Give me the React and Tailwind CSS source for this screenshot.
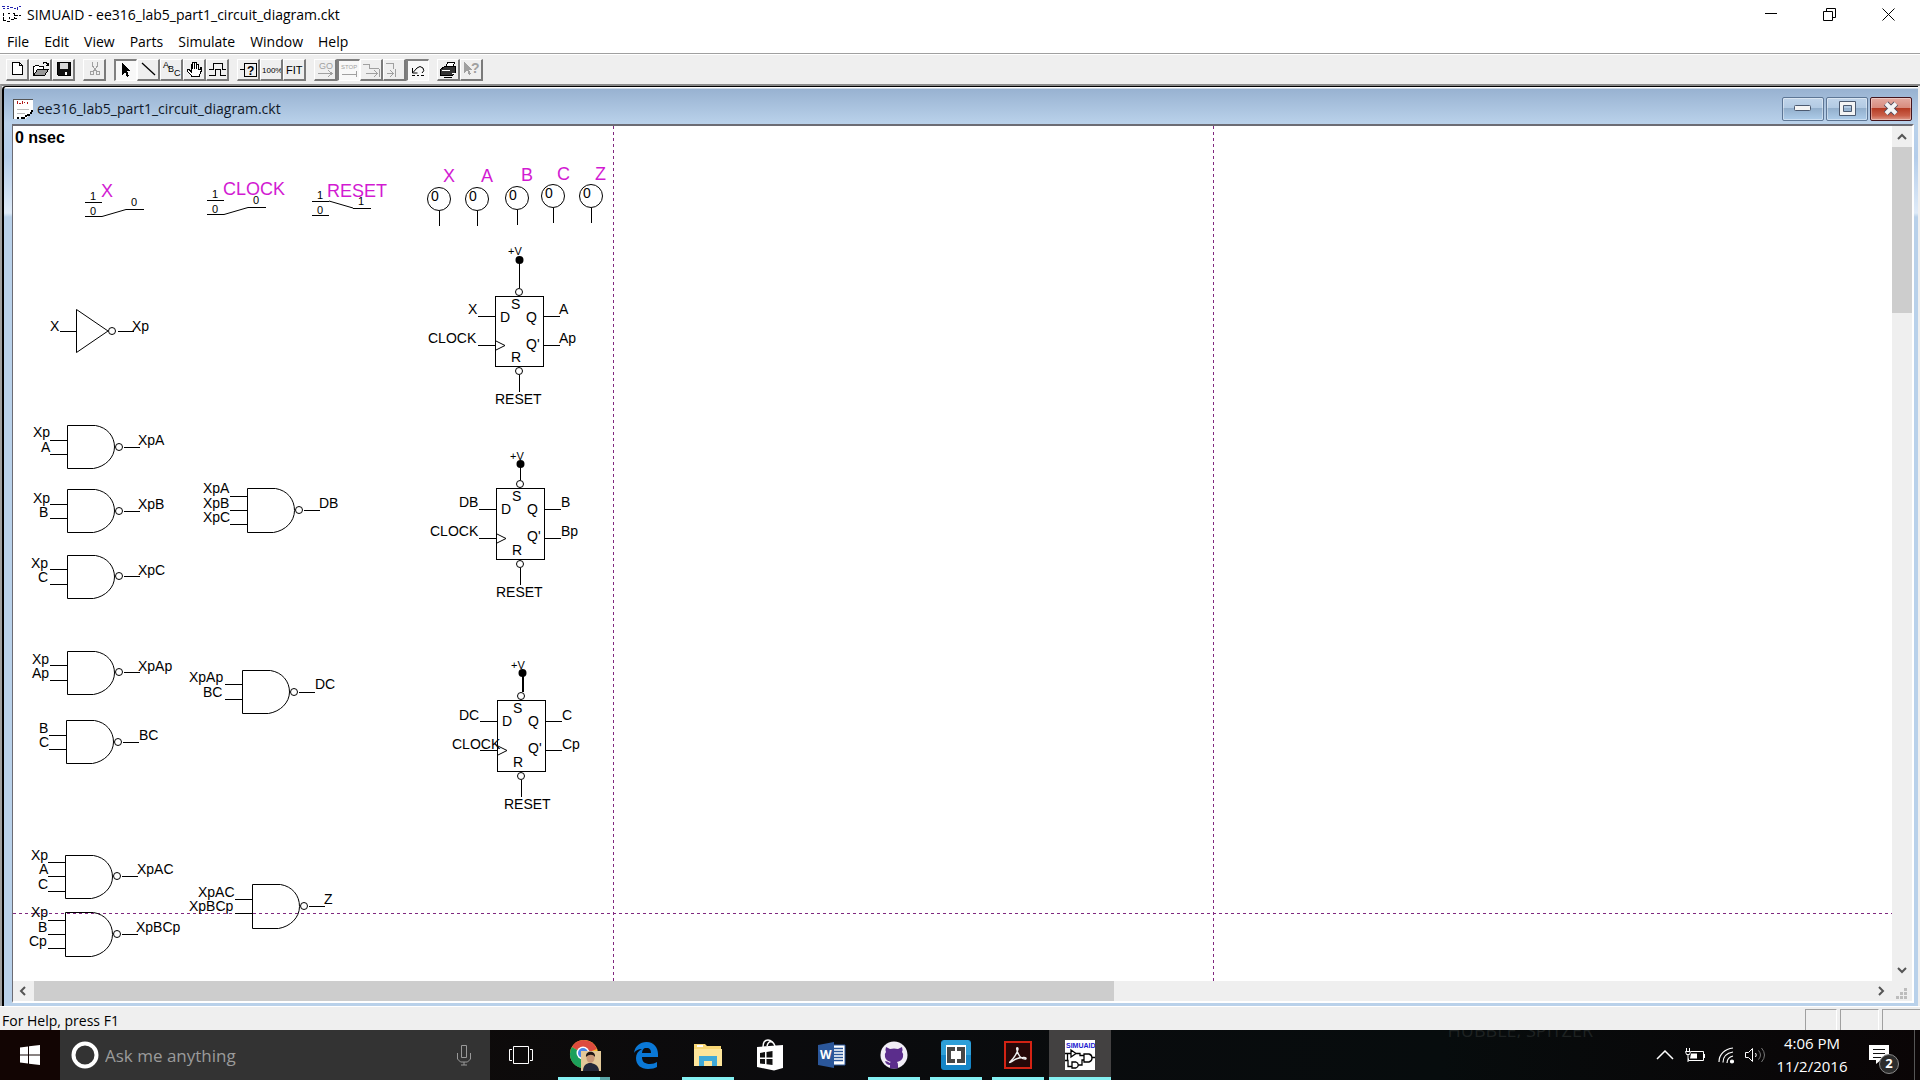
import React from "react";

/* ---------- circuit diagram ---------- */

function Label({ x, y, size = 14, fill = "#000", bold, children }) {
  return (
    <text x={x} y={y} fontSize={size} fill={fill} fontWeight={bold ? 700 : 400}>
      {children}
    </text>
  );
}

function Line({ d, w = 1 }) {
  return <path d={d} fill="none" stroke="#000" strokeWidth={w} shapeRendering="crispEdges" />;
}

function Bubble({ x, y }) {
  return <circle cx={x} cy={y} r="3.5" fill="none" stroke="#000" />;
}

function Switch({ x, y, name, nameX, nameY, on }) {
  return (
    <g>
      <Line d={`M${x} ${y + 0.5}h17M${x} ${y + 14.5}h17M${x + 41} ${y + 7.5}h18`} />
      <path
        d={on ? `M${x + 17} ${y}l24 7` : `M${x + 17} ${y + 14.5}l24 -7`}
        fill="none"
        stroke="#000"
      />
      <Label x={x + 5} y={y - 2} size={11}>1</Label>
      <Label x={x + 5} y={y + 13} size={11}>0</Label>
      <Label x={x + 46} y={y + 4} size={11}>{on ? 1 : 0}</Label>
      <Label x={nameX} y={nameY} size={18} fill="#d21ad2">{name}</Label>
    </g>
  );
}

function Probe({ x, y, name, nameX, nameY }) {
  return (
    <g>
      <circle cx={x} cy={y} r="11.5" fill="none" stroke="#000" />
      <Line d={`M${x + 0.5} ${y + 12}v15`} />
      <Label x={x - 8} y={y + 2}>0</Label>
      <Label x={nameX} y={nameY} size={18} fill="#d21ad2">{name}</Label>
    </g>
  );
}

function Nand({ x, y, mid, pins, ins, out, outPos, h = 43 }) {
  const bx = x + 0.5;
  const by = y + 0.5;
  return (
    <g>
      <path
        d={`M${bx + 28} ${by}H${bx}v${h}h26M${bx + 28} ${by}c12 2 19 11 19 ${h / 2}s-9 ${h / 2 - 2} -21 ${h / 2}`}
        fill="none"
        stroke="#000"
      />
      {pins.map((p) => (
        <Line key={p} d={`M${x - 17} ${p + 0.5}h17`} />
      ))}
      <Bubble x={x + 52} y={mid} />
      <Line d={`M${x + 57} ${mid + 0.5}h16`} />
      {ins.map(([t, lx, ly]) => (
        <Label key={t} x={lx} y={ly}>{t}</Label>
      ))}
      <Label x={outPos[0]} y={outPos[1]}>{out}</Label>
    </g>
  );
}

function FlipFlop({ x, y, h = 70, dotX, dotY, vX, vY, d, dX, clockX, q, qp, qX, labelY, resetX, resetY, thick }) {
  const c = x + 24;
  const pin = y + h - 49.5;
  return (
    <g>
      <Label x={vX} y={vY} size={11}>+V</Label>
      <circle cx={dotX + 0.5} cy={dotY} r="4" />
      <Line d={`M${dotX + 0.5} ${dotY}V${y - 8}`} w={thick ? 2 : 1} />
      <Bubble x={c} y={y - 4} />
      <rect x={x + 0.5} y={y + 0.5} width="48" height={h} fill="none" stroke="#000" />
      <path d={`M${x + 1} ${pin + 24.5}l9 4.5l-9 4.5`} fill="none" stroke="#000" />
      <Line
        d={`M${x - 17} ${pin}h17M${x - 17} ${pin + 29}h17M${x + 49} ${pin}h16M${x + 49} ${pin + 29}h16M${x + 24.5} ${y + h + 9}v17`}
      />
      <Bubble x={c} y={y + h + 5} />
      <Label x={x + 16} y={y + 13}>S</Label>
      <Label x={x + 5} y={y + 26}>D</Label>
      <Label x={x + 31} y={y + 26}>Q</Label>
      <Label x={x + 31} y={y + 53}>Q'</Label>
      <Label x={x + 16} y={y + h - 4}>R</Label>
      <Label x={dX} y={labelY}>{d}</Label>
      <Label x={clockX} y={labelY + 29}>CLOCK</Label>
      <Label x={qX} y={labelY}>{q}</Label>
      <Label x={qX} y={labelY + 29}>{qp}</Label>
      <Label x={resetX} y={resetY}>RESET</Label>
    </g>
  );
}

function Circuit() {
  return (
    <svg
      className="absolute inset-0 h-full w-full font-['Liberation_Sans',sans-serif]"
      role="img"
      aria-label="Circuit diagram"
    >
      <g stroke="#80287f" strokeDasharray="3 3" shapeRendering="crispEdges">
        <line x1="600.5" y1="0" x2="600.5" y2="100%" />
        <line x1="1200.5" y1="0" x2="1200.5" y2="100%" />
        <line x1="0" y1="787.5" x2="100%" y2="787.5" />
      </g>
      <g transform="translate(-13 -126)">
        <Label x={15} y={143} size={16} bold>0 nsec</Label>

        <Switch x={85} y={202} name="X" nameX={101} nameY={197} />
        <Switch x={207} y={200} name="CLOCK" nameX={223} nameY={195} />
        <Switch x={312} y={201} name="RESET" nameX={327} nameY={197} on />

        <Probe x={439} y={199} name="X" nameX={443} nameY={182} />
        <Probe x={477} y={199} name="A" nameX={481} nameY={182} />
        <Probe x={517} y={198} name="B" nameX={521} nameY={181} />
        <Probe x={553} y={196} name="C" nameX={557} nameY={180} />
        <Probe x={591} y={196} name="Z" nameX={595} nameY={180} />

        <Label x={50} y={331}>X</Label>
        <Line d="M60 331.5h16M118 331.5h16" />
        <path d="M76.5 309.500V352.500L108 331z" fill="none" stroke="#000" />
        <Bubble x={112} y={331} />
        <Label x={132} y={331}>Xp</Label>

        <Nand x={67} y={425} mid={447} pins={[440, 454]} ins={[["Xp", 33, 437], ["A", 41, 452]]} out="XpA" outPos={[138, 445]} />
        <Nand x={67} y={489} mid={511} pins={[504, 518]} ins={[["Xp", 33, 503], ["B", 39, 517]]} out="XpB" outPos={[138, 509]} />
        <Nand x={67} y={555} mid={576} pins={[569, 584]} ins={[["Xp", 31, 568], ["C", 38, 582]]} out="XpC" outPos={[138, 575]} />
        <Nand x={67} y={651} mid={672} pins={[665, 680]} ins={[["Xp", 32, 664], ["Ap", 32, 678]]} out="XpAp" outPos={[138, 671]} />
        <Nand x={66} y={720} mid={742} pins={[735, 749]} ins={[["B", 39, 733], ["C", 39, 747]]} out="BC" outPos={[139, 740]} />
        <Nand x={65} y={855} mid={876} pins={[862, 876, 891]} ins={[["Xp", 31, 860], ["A", 39, 874], ["C", 38, 889]]} out="XpAC" outPos={[137, 874]} />
        <Nand x={65} y={912} mid={934} pins={[920, 934, 948]} h={44} ins={[["Xp", 31, 917], ["B", 38, 932], ["Cp", 29, 946]]} out="XpBCp" outPos={[136, 932]} />

        <Nand x={247} y={488} mid={510} pins={[496, 510, 524]} h={44} ins={[["XpA", 203, 493], ["XpB", 203, 508], ["XpC", 203, 522]]} out="DB" outPos={[319, 508]} />
        <Nand x={242} y={670} mid={692} pins={[684, 699]} ins={[["XpAp", 189, 682], ["BC", 203, 697]]} out="DC" outPos={[315, 689]} />
        <Nand x={252} y={884} mid={906} pins={[899, 913]} h={44} ins={[["XpAC", 198, 897], ["XpBCp", 189, 911]]} out="Z" outPos={[324, 904]} />

        <FlipFlop x={495} y={296} dotX={519} dotY={260} vX={508} vY={255} d="X" dX={468} clockX={428} q="A" qp="Ap" qX={559} labelY={314} resetX={495} resetY={404} />
        <FlipFlop x={496} y={488} h={71} dotX={520} dotY={464} vX={510} vY={460} d="DB" dX={459} clockX={430} q="B" qp="Bp" qX={561} labelY={507} resetX={496} resetY={597} />
        <FlipFlop x={497} y={700} h={71} dotX={522} dotY={673} vX={511} vY={669} d="DC" dX={459} clockX={452} q="C" qp="Cp" qX={562} labelY={720} resetX={504} resetY={809} thick />
      </g>
    </svg>
  );
}

/* ---------- toolbar ---------- */

const G = "#a0a0a0";

function Glyph({ children }) {
  return (
    <svg width="22" height="20" viewBox="0 0 22 20" fill="none" stroke="#000" shapeRendering="crispEdges" aria-hidden="true">
      {children}
    </svg>
  );
}

function TinyText({ x, y, size, fill = "#000", children }) {
  return (
    <text x={x} y={y} fontSize={size} fill={fill} stroke="none" className="font-['Liberation_Sans',sans-serif]">
      {children}
    </text>
  );
}

const toolGroups = [
  [
    ["New", <path d="M5.500 2.500h7l3 3v9h-10zM12.500 2.500v3h3" fill="#fff" />],
    ["Open", <>
      <path d="M3.500 15.500v-9h1l1-1h3l1 1h4v2" fill="#fff" />
      <path d="M3.500 15.500l4-6h11l-4 6z" fill="#999" />
      <path d="M12.500 3.500h1v-1h3v1h1v2M15.500 5.500h3M18.500 3v3" />
    </>],
    ["Save", <>
      <path d="M4.500 2.500h13v13h-12l-1-1z" fill="#111" />
      <path d="M7 3h8v6h-8z" fill="#d8d8d8" stroke="none" />
      <path d="M12 12h2v3h-2z" fill="#fff" stroke="none" />
    </>],
  ],
  [
    ["Cut", <>
      <path d="M8.500 2v4l4 5M13.500 2v4l-4 5" stroke={G} />
      <circle cx="8" cy="13" r="2" stroke={G} />
      <circle cx="14" cy="13" r="2" stroke={G} />
    </>],
  ],
  [
    ["Select", <path d="M6 2v12l3-3l2 5l2-1l-2-5h4z" fill="#000" stroke="none" />, "on"],
    ["Wire", <path d="M4 3l13 12" shapeRendering="auto" strokeWidth="1.300" />],
    ["Label", <>
      <TinyText x={2} y={8} size={9}>A</TinyText>
      <TinyText x={7} y={12} size={9}>B</TinyText>
      <TinyText x={13} y={16} size={9}>C</TinyText>
    </>],
    ["Pan", <path d="M8 16.500l-5-6v-1h2l2 2v-7h1.500v4v-6h2v6v-6h2v6v-4h2v5h1.500v-2h1v4l-2 5z" fill="#fff" />],
    ["Waveform", <path d="M2 9.500h4v-6h9v6h4M2 15.500h6v-6h5v6h6" />],
  ],
  [
    ["Properties", <>
      <path d="M6.500 3.500h12v13h-12zM2 9.500h4" />
      <text x="9" y="15" fontSize="12" fontWeight="700" fill="#000" stroke="none" className="font-['Liberation_Sans',sans-serif]">?</text>
    </>],
    ["Zoom 100%", <TinyText x={1} y={13} size={8}>100%</TinyText>],
    ["Fit", <TinyText x={2} y={14} size={11}>FIT</TinyText>],
  ],
  [
    ["Go", <>
      <TinyText x={4} y={9} size={9} fill={G}>GO</TinyText>
      <path d="M3 13.500h14M13 10l4 3.500l-4 3.500" stroke={G} />
    </>],
    ["Stop", <>
      <TinyText x={2} y={8} size={6} fill={G}>STOP</TinyText>
      <path d="M3 13.500h14M17.500 10v6" stroke={G} />
    </>, "on"],
    ["Step", <path d="M2 4.500h6v4h10M5 13.500h11M13 10l3.500 3.500l-3.500 3.500M18.500 9v8" stroke={G} />],
    ["Event", <path d="M2 3.500h7v5M3 13.500h6M6 10l3.500 3.500l-3.500 3.500M11.500 9v8" stroke={G} />],
    ["Reset", <path d="M4.500 7v5h5M5 11.500l4-4.500q3-3 6 0q2 3-1 5M4 14.500h3M9 14.500h2M13 14.500h3" shapeRendering="auto" />, "on"],
  ],
  [
    ["Print", <>
      <path d="M7.500 7.500l2-5h7l-2 5z" fill="#fff" />
      <path d="M2.500 9.500l4-3h11v6l-3 3h-12z" fill="#333" />
      <path d="M4 10.500h8M13.500 13.500h3" stroke="#fff" />
      <path d="M5.500 17h8" />
    </>],
    ["Context help", <>
      <path d="M3 2v11l3-3l2 5l2-1l-2-4h3z" fill={G} stroke="none" />
      <text x="10" y="13" fontSize="14" fontWeight="700" fill={G} stroke="none" className="font-['Liberation_Sans',sans-serif]">?</text>
    </>],
  ],
];

function Toolbar() {
  return (
    <div className="flex h-[30px] items-center gap-2 border-t border-white bg-[#efefef] px-[6px]" role="toolbar">
      {toolGroups.map((group, i) => (
        <div key={i} className="flex">
          {group.map(([name, icon, on]) => (
            <button
              key={name}
              aria-label={name}
              aria-pressed={on ? true : undefined}
              className={
                on
                  ? "h-[22px] w-[23px] overflow-hidden border-t-2 border-l-2 border-r border-b border-t-[#808080] border-l-[#808080] border-r-white border-b-white bg-[#f8f8f8]"
                  : "h-[22px] w-[23px] overflow-hidden border-t border-l border-r-2 border-b-2 border-t-white border-l-white border-r-[#7a7a7a] border-b-[#7a7a7a] bg-[#efefef]"
              }
            >
              <Glyph>{icon}</Glyph>
            </button>
          ))}
        </div>
      ))}
    </div>
  );
}

/* ---------- window parts ---------- */

function TitleBar() {
  return (
    <header className="flex h-7 items-center bg-white pl-[2px]">
      <svg width="20" height="20" viewBox="0 0 20 20" shapeRendering="crispEdges" fill="none" stroke="#000" aria-hidden="true">
        <path d="M0 2.500h3M1 4.500h2M5 2.500h2M5 4.500h2M8 3.500h3M12 4.500h2M15 2.500v3M17 2.500h2" stroke="#2222b0" />
        <path d="M1.500 9v8M1 16.500h3M6 9.500h2M7 12.500v2M5 17.500h3M9 15.500h3M11 9.500h2M12.500 9v6M13 14.500h2M13 11.500h6" strokeDasharray="3 1" />
      </svg>
      <h1 className="pl-[5px] text-[14px] text-black">SIMUAID - ee316_lab5_part1_circuit_diagram.ckt</h1>
      <div className="ml-auto flex pr-[2px]">
        <button aria-label="Minimize" className="flex h-7 w-[58px] items-center justify-center">
          <svg width="12" height="12" stroke="#000"><path d="M0 5.500h12" /></svg>
        </button>
        <button aria-label="Restore" className="flex h-7 w-[58px] items-center justify-center">
          <svg width="13" height="13" fill="none" stroke="#000"><path d="M.5 3.500h9v9h-9zM3.500 3V.5h9v9h-3" /></svg>
        </button>
        <button aria-label="Close" className="flex h-7 w-[60px] items-center justify-center">
          <svg width="13" height="13" stroke="#000"><path d="M.5 .5l12 12M12.500 .5l-12 12" /></svg>
        </button>
      </div>
    </header>
  );
}

const menus = ["File", "Edit", "View", "Parts", "Simulate", "Window", "Help"];

function ScrollButton({ label, d, className }) {
  return (
    <button aria-label={label} className={`flex shrink-0 items-center justify-center bg-[#efefef] ${className}`}>
      <svg width="10" height="10" viewBox="0 0 10 10" fill="none" stroke="#555" strokeWidth="2"><path d={d} /></svg>
    </button>
  );
}

function CaptionButton({ label, close, children }) {
  return (
    <button
      aria-label={label}
      className={
        close
          ? "flex h-6 w-[42px] items-center justify-center rounded-[2px] border border-[#43141c] bg-[linear-gradient(#e3aba2,#d88b7d_45%,#b43a22_46%,#c9604a_80%,#dd9a8a)] shadow-[inset_0_0_0_1px_rgba(255,255,255,0.35)]"
          : "flex h-6 w-[42px] items-center justify-center rounded-[2px] border border-[#5d7695] bg-[linear-gradient(#c1d5ea,#b2cae3_45%,#92aecb_46%,#aecdea)] shadow-[inset_0_0_0_1px_rgba(255,255,255,0.4)]"
      }
    >
      {children}
    </button>
  );
}

function ChildWindow() {
  return (
    <section className="flex min-h-0 flex-1 flex-col border-t-2 border-l-2 border-t-[#8a8a8a] border-l-[#a0a0a0] pr-[2px]">
      <div className="flex min-h-0 flex-1 flex-col rounded-tl-[4px] border-t border-l-2 border-black bg-[linear-gradient(#fff_0,#fff_1px,#98b2d1_2px,#b9d1ea_36px,#b4cdea_70px,#dfebf8_126px,#b9d1ea_130px)] pr-1 pl-2">
        <div className="flex h-[37px] items-center pt-[6px]">
          <svg className="ml-[1px]" width="20" height="20" viewBox="0 0 20 20" fill="none" shapeRendering="crispEdges" aria-hidden="true">
            <path d="M0 0h20v13l-8 7h-12z" fill="#fff" />
            <path d="M.5 20V.500H20" stroke="#555" />
            <path d="M4.500 2v3M6 4.500h2M9.500 2v3M11 3.500h1M14 2.500v2" stroke="#b01818" />
            <path d="M4 10.500h12M4 14.500h8" stroke="#bbb" />
            <path d="M4 18.500h2M8 18.500h4M12 16.500h2M14 15.500h3M17 13.500h2M18.500 11v2" stroke="#000" strokeWidth="2" />
          </svg>
          <h2 className="pl-1 text-[14px] text-[#101828]">ee316_lab5_part1_circuit_diagram.ckt</h2>
          <div className="ml-auto flex gap-[2px] pr-[2px]">
            <CaptionButton label="Minimize document">
              <svg width="18" height="7"><rect x=".5" y=".5" width="16" height="5" rx="1" fill="#f4f4f4" stroke="#4c5a70" /></svg>
            </CaptionButton>
            <CaptionButton label="Restore document">
              <svg width="17" height="15" fill="#f4f4f4" stroke="#4c5a70"><path fillRule="evenodd" d="M.5 .5h16v14h-16zM4.500 4.500v6h8v-6z" /></svg>
            </CaptionButton>
            <CaptionButton label="Close document" close>
              <svg width="18" height="15" viewBox="0 0 18 15"><path d="M4 2.500l10 10M14 2.500l-10 10" stroke="#4a4a5c" strokeWidth="6" /><path d="M4 2.500l10 10M14 2.500l-10 10" stroke="#f4f4f4" strokeWidth="4" /></svg>
            </CaptionButton>
          </div>
        </div>
        <div className="flex min-h-0 flex-1 flex-col border-t-2 border-l border-r-2 border-b-2 border-t-[#6c6c74] border-l-[#6c6c74] border-r-white border-b-white bg-[#efefef]">
          <div className="flex min-h-0 flex-1">
            <div className="relative flex-1 overflow-hidden bg-white">
              <Circuit />
            </div>
            <div className="flex w-5 flex-col">
              <ScrollButton label="Scroll up" className="h-[21px]" d="M1 7l4-4l4 4" />
              <div className="flex-1"><div className="h-[20.4%] bg-[#cdcdcd]" /></div>
              <ScrollButton label="Scroll down" className="h-[21px]" d="M1 2l4 4l4-4" />
            </div>
          </div>
          <div className="flex h-5">
            <ScrollButton label="Scroll left" className="w-[21px]" d="M6 1l-4 4l4 4" />
            <div className="flex-1"><div className="h-full w-[58.8%] bg-[#cdcdcd]" /></div>
            <ScrollButton label="Scroll right" className="w-[21px]" d="M2 1l4 4l-4 4" />
            <div className="flex w-5 items-end justify-center pb-[1px]">
              <svg width="12" height="12" fill="#bdbdbd"><path d="M8 0h3v3h-3zM4 4h3v3h-3zM8 4h3v3h-3zM0 8h3v3h-3zM4 8h3v3h-3zM8 8h3v3h-3z" /></svg>
            </div>
          </div>
        </div>
        <div className="h-[3px] shrink-0" />
      </div>
    </section>
  );
}

/* ---------- taskbar ---------- */

const apps = [
  ["Chrome", "split", (
    <svg className="ml-[2px]" width="32" height="32" viewBox="0 0 32 32">
      <circle cx="15" cy="15" r="14" fill="#fbc02d" />
      <path d="M15 15L2.900 8A14 14 0 0 1 28 10z" fill="#dd4b3e" />
      <path d="M15 15L2.900 8A14 14 0 0 0 13 29z" fill="#1ca05a" />
      <circle cx="14" cy="14" r="6.500" fill="#fff" />
      <circle cx="14" cy="14" r="5" fill="#4a86e8" />
      <rect x="12" y="12" width="20" height="20" fill="#e3c999" />
      <path d="M14 32c0-6 4-8 7-8s9 2 9 8z" fill="#232838" />
      <ellipse cx="21.500" cy="19" rx="4" ry="5" fill="#c89878" />
      <path d="M17 18c-1-7 10-7 9 0c-2-3-6-3-9 0z" fill="#1e1614" />
    </svg>
  )],
  ["Edge", "", (
    <svg width="28" height="28" viewBox="0 0 28 28">
      <path d="M2 12C3 5 8 1 14.500 1C22 1 26 7 26 13v3H10c0 5 3 7 8 7c3 0 5-1 7-2v5c-2 1-5 2-9 2C9 28 4 24 4 17c0-4 2-7 6-9c-4 0-7 2-8 4zM10 12h9c0-3-1-5-4.500-5S10.500 9 10 12z" fill="#0a78d6" />
    </svg>
  )],
  ["File Explorer", "on", (
    <svg width="28" height="24" viewBox="0 0 28 24">
      <path d="M0 1h11l2 2h14v20H0z" fill="#f8d775" />
      <path d="M0 6h28v17H0z" fill="#fde59a" />
      <path d="M3 2h6v2h-6z" fill="#fff" />
      <path d="M5 23V13h18v10h-5v-5h-8v5z" fill="#3fa9d8" />
    </svg>
  )],
  ["Store", "", (
    <svg width="28" height="32" viewBox="0 0 28 32">
      <path d="M1 8l26-2v23l-9 2.500L1 28z" fill="#fff" />
      <path d="M7 8C7 3 9 1 12 1s6 3 7 6M11 7c1-4 3-5 5-4" fill="none" stroke="#fff" strokeWidth="1.500" />
      <path d="M4 14l5-1v5.500H4zM10.500 13l6-1v6.500h-6zM4 20h5v5l-5-.5zM10.500 20h6v6l-6-.8z" fill="#111" />
    </svg>
  )],
  ["Word", "", (
    <svg width="28" height="28" viewBox="0 0 28 28">
      <path d="M14 4h13v20H14z" fill="#fff" stroke="#2b579a" />
      <path d="M16 7.500h9M16 10.500h9M16 13.500h9M16 16.500h9M16 19.500h9" stroke="#2b579a" strokeWidth="1.500" />
      <path d="M0 4l16-3v26L0 24z" fill="#2b579a" />
      <text x="2" y="18" fontSize="12" fontWeight="700" fill="#fff">W</text>
    </svg>
  )],
  ["GitHub", "on", (
    <svg width="28" height="28" viewBox="0 0 28 28">
      <circle cx="14" cy="14" r="13.500" fill="#f1eef6" />
      <path d="M6 6l4 2q4-1 8 0l4-2q1 3 0 5q2 2 1 5q-1 4-6 5q1 1 1 3v3.500h-8V24q-4 0-5-4q2 0 5 2q0-1 1-1q-5-1-6-5q-1-3 1-5q-1-2 0-5z" fill="#5b2d8c" />
    </svg>
  )],
  ["Brackets", "on", (
    <svg width="30" height="30" viewBox="0 0 30 30">
      <rect width="30" height="30" rx="3" fill="#1585c7" />
      <path d="M3 0h24l3 3v12H0V3z" fill="#2f9fd8" />
      <path d="M5 5h20v20H5z" fill="#fff" />
      <path d="M6 7h8v4h-4v8h4v4H6zM16 7h8v16h-8v-4h4v-8h-4z" fill="#474747" />
    </svg>
  )],
  ["Acrobat Reader", "on", (
    <svg width="28" height="28" viewBox="0 0 28 28">
      <rect x="1" y="1" width="26" height="26" fill="#260808" stroke="#d42314" strokeWidth="2" />
      <path d="M6 21c3-3 7-8 8-13c0-2-2-2-1 1c1 5 4 9 8 9c2 0 1-2-2-1.500c-4 0-8 1.500-11 4c-2 1.500-3 1-2 .5z" fill="none" stroke="#eee" strokeWidth="1.400" />
    </svg>
  )],
  ["SIMUAID", "active", (
    <svg width="30" height="30" viewBox="0 0 30 30">
      <rect width="30" height="30" fill="#fff" />
      <text x="1" y="8" fontSize="7" fontWeight="700" fill="#2020d0" className="font-['Liberation_Sans',sans-serif]">SIMUAID</text>
      <path d="M6 10l5 3.500l-5 3.500zM19 14h5c4 1 4 7 0 8h-5zM7 22h4c3 1 3 5 0 6H7zM0 13.500h6M11 13.500h4v2h4M0 20.500h3v6h4M2.500 14v6M27 17.500h3M13 25h4v-5h2" fill="none" stroke="#000" strokeWidth="1.300" />
    </svg>
  )],
];

function Taskbar() {
  return (
    <footer className="flex h-[50px] shrink-0 items-stretch bg-[linear-gradient(90deg,#110a06,#0b0b0d_40%,#070c0d_75%,#0a0506)] text-white">
      <button aria-label="Start" className="flex w-[60px] items-center justify-center bg-[#120503]">
        <svg width="20" height="20" viewBox="0 0 20 20" fill="#fff"><path d="M0 2.500l8-1v8H0zM9 1.300L20 0v9.500H9zM0 10.500h8v8l-8-1zM9 10.500h11V20L9 18.700z" /></svg>
      </button>
      <label className="flex w-[430px] items-center bg-[#333]">
        <svg className="ml-[11px]" width="28" height="28"><circle cx="14" cy="14" r="11.500" fill="none" stroke="#fff" strokeWidth="4" /></svg>
        <input
          aria-label="Search"
          placeholder="Ask me anything"
          className="ml-[6px] min-w-0 flex-1 bg-transparent pt-[2px] text-[17px] placeholder:text-[#9b9b9b] focus:outline-none"
        />
        <svg className="mr-[18px]" width="16" height="22" viewBox="0 0 16 22" fill="none" stroke="#999"><path d="M5.500 1.500h5v12h-5zM1.500 9v6l3 3h7l3-3V9M8 18v3M5 21h6" /></svg>
      </label>
      <button aria-label="Task view" className="mr-[2px] flex w-[61px] items-center justify-center">
        <svg width="26" height="18" fill="none" stroke="#fff"><path d="M5.500 .5h15v17h-15zM4 3.500H1.500v11H4M22 3.500h2.500v11H22" /></svg>
      </button>
      {apps.map(([name, state, icon]) => (
        <button
          key={name}
          aria-label={name}
          className={state === "active" ? "relative flex w-[62px] items-center justify-center bg-[#434141]" : "relative flex w-[62px] items-center justify-center"}
        >
          {icon}
          {state === "active" && <span className="absolute inset-x-0 bottom-0 h-[3px] bg-[#84f0f2]" />}
          {state === "on" && <span className="absolute inset-x-[5px] bottom-0 h-[3px] bg-[#84f0f2]" />}
          {state === "split" && <span className="absolute inset-x-[5px] bottom-0 h-[3px] border-r-[10px] border-[#5ba6a8] bg-[#84f0f2]" />}
        </button>
      ))}
      <div className="flex flex-1 items-start justify-end overflow-hidden">
        <span className="mr-[60px] h-2 overflow-hidden" aria-hidden="true">
          <span className="-mt-[10px] block text-[18px] leading-5 text-[#1e2222]">HUBBLE, SPITZER</span>
        </span>
      </div>
      <div className="flex items-center">
        <button aria-label="Show hidden icons" className="flex h-full w-6 items-center justify-center">
          <svg width="18" height="10" fill="none" stroke="#fff" strokeWidth="1.500"><path d="M1 9l8-8l8 8" /></svg>
        </button>
        <button aria-label="Battery" className="ml-[7px] flex h-full w-[22px] items-center justify-center">
          <svg width="20" height="15" viewBox="0 0 20 15" fill="none" stroke="#fff"><path d="M6 3.500h12.500v9H3.500v-2M19.500 6v4" /><path d="M6 5.500h6v5H5z" fill="#fff" stroke="none" /><path d="M1.500 0v3M4.500 0v3M.5 3.500h5l-1 3h-3zM3 6v8" /></svg>
        </button>
        <button aria-label="Network" className="ml-[9px] flex h-full w-[22px] items-center justify-center">
          <svg width="17" height="17" viewBox="0 0 17 17" fill="none" stroke="#fff" strokeWidth="1.200"><path d="M1 15C1 7 7 2 15 1M5 15.500C5 9 9 6 15 5M9 16C9 12 11 10 15 9" /><circle cx="14" cy="14.500" r="1.500" fill="#fff" /></svg>
        </button>
        <button aria-label="Volume" className="ml-[6px] flex h-full w-6 items-center justify-center">
          <svg width="21" height="18" viewBox="0 0 21 18" fill="none" stroke="#fff"><path d="M.5 6.500h3l4-4v13l-4-4h-3z" /><path d="M10.500 7q1.500 2 0 4" /><path d="M13.500 4.500q4 4.500 0 9M16.500 2q6 7 0 14" stroke="#777" /></svg>
        </button>
        <button className="ml-[5px] w-[80px] text-center text-[15px] leading-[23px]">
          <span className="block">4:06 PM</span>
          <span className="block">11/2/2016</span>
        </button>
        <button aria-label="Notifications" className="relative ml-[17px] mr-[13px] flex h-full w-8 items-center">
          <svg width="20" height="20" viewBox="0 0 20 20"><path d="M0 0h20v15h-8l-5 4v-4H0z" fill="#fff" /><path d="M4 4.500h12M4 8.500h12M4 12.500h8" stroke="#111" /></svg>
          <span className="absolute top-6 left-[10px] flex h-5 w-5 items-center justify-center rounded-full border border-[#8a8a8a] bg-[#2d2d2d] text-[13px] font-bold">2</span>
        </button>
        <div className="h-full w-[6px] border-l border-[#555]" />
      </div>
    </footer>
  );
}

export default function App() {
  return (
    <div className="flex h-screen flex-col overflow-hidden bg-[#efefef] font-['Open_Sans',sans-serif]">
      <TitleBar />
      <nav className="flex h-[26px] items-center gap-[15px] border-b border-[#a0a0a0] bg-white pt-[2px] pl-[7px] text-[14px] text-black">
        {menus.map((m) => (
          <button key={m} className="leading-5">{m}</button>
        ))}
      </nav>
      <Toolbar />
      <ChildWindow />
      <div className="flex h-6 shrink-0 items-stretch border-t border-white pl-[2px] text-[14px] text-black">
        <span className="flex-1 leading-[28px]">For Help, press F1</span>
        <div className="mt-[2px] flex gap-[3px]">
          <div className="w-8 border-t border-l border-r border-[#a0a0a0] border-r-white" />
          <div className="w-[39px] border-t border-l border-r border-[#a0a0a0] border-r-white" />
          <div className="w-[38px] border-t border-l border-[#a0a0a0]" />
        </div>
      </div>
      <Taskbar />
    </div>
  );
}
